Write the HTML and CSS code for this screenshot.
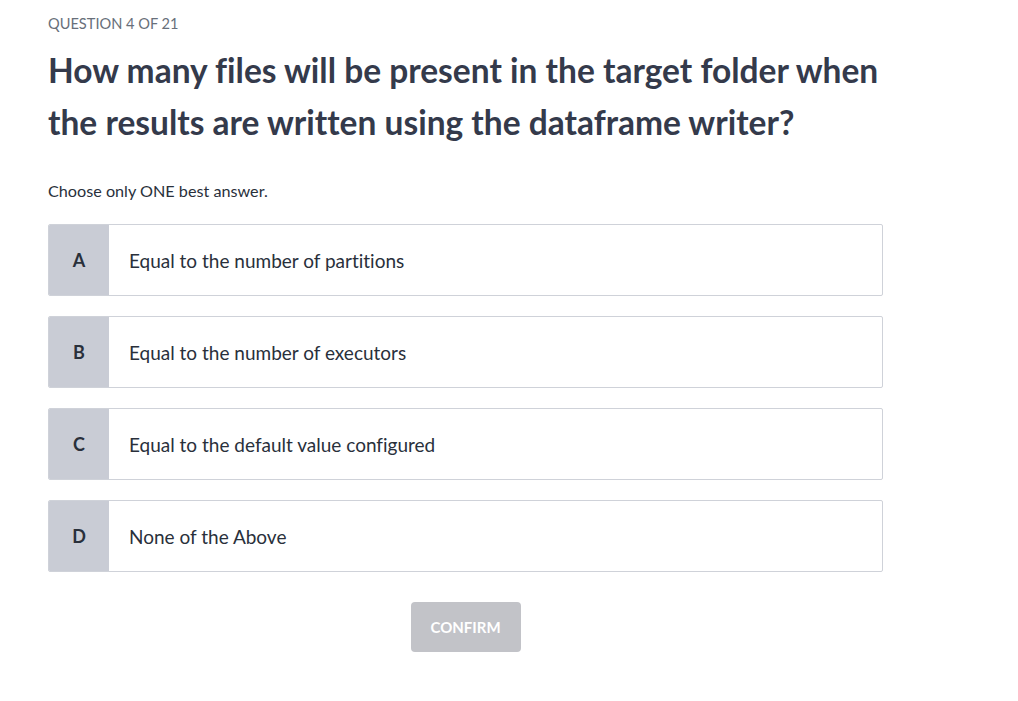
FILE: index.html
```html
<!DOCTYPE html>
<html>
<head>
<meta charset="utf-8">
<link rel="stylesheet" href="styles.css">
</head>
<body>
<main class="quiz">
  <div class="counter">QUESTION 4 OF 21</div>
  <h1 class="question">How many files will be present in the target folder when the results are written using the dataframe writer?</h1>
  <p class="hint">Choose only ONE best answer.</p>
  <ul class="options">
    <li class="option"><span class="letter">A</span><span class="text">Equal to the number of partitions</span></li>
    <li class="option"><span class="letter">B</span><span class="text">Equal to the number of executors</span></li>
    <li class="option"><span class="letter">C</span><span class="text">Equal to the default value configured</span></li>
    <li class="option"><span class="letter">D</span><span class="text">None of the Above</span></li>
  </ul>
  <div class="actions"><button class="confirm">CONFIRM</button></div>
</main>
</body>
</html>
```
FILE: styles.css
```css
* { box-sizing: border-box; }
body {
  margin: 0;
  background: #fff;
  font-family: "Lato", "Open Sans", sans-serif;
  font-variant-ligatures: none;
  color: #29303b;
}
.quiz {
  width: 835px;
  margin-left: 48px;
  padding-top: 15px;
}
.counter {
  font-size: 14.6px;
  line-height: 18px;
  color: #686f7a;
}
.question {
  margin: 11px 0 0;
  font-size: 33.5px;
  line-height: 52px;
  font-weight: 700;
  color: #343a4b;
  width: 850px;
}
.hint {
  margin: 33px 0 0;
  font-size: 16.2px;
  line-height: 20px;
  color: #29303b;
}
.options {
  list-style: none;
  margin: 23px 0 0;
  padding: 0;
  display: flex;
  flex-direction: column;
  gap: 20px;
}
.option {
  display: flex;
  align-items: stretch;
  height: 72px;
  border: 1px solid #cfd2d9;
  border-radius: 2px;
  overflow: hidden;
}
.letter {
  width: 60px;
  background: #c9ccd5;
  display: flex;
  align-items: center;
  justify-content: center;
  font-weight: 700;
  font-size: 18px;
  color: #29303b;
}
.text {
  display: flex;
  align-items: center;
  padding-left: 20px;
  font-size: 19px;
  color: #29303b;
}
.actions {
  display: flex;
  justify-content: center;
  margin-top: 30px;
}
.confirm {
  width: 110px;
  height: 50px;
  border: 0;
  border-radius: 4px;
  background: #c2c3c8;
  color: #fff;
  font-family: inherit;
  font-weight: 700;
  font-size: 15px;
}
```
